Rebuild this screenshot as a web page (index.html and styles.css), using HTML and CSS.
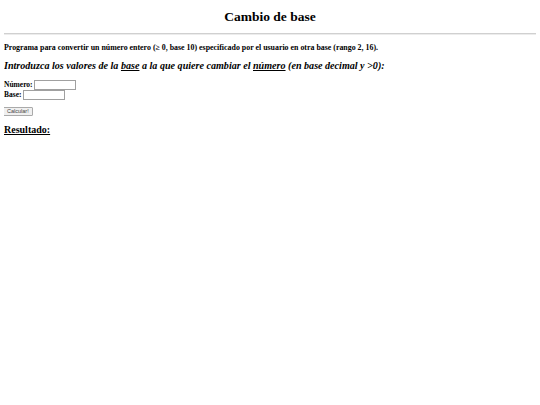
FILE: index.html
```html
<!DOCTYPE html>
<html lang="es">
<head>
<meta charset="utf-8">
<title>Cambio de base</title>
<link rel="stylesheet" href="styles.css">
</head>
<body>
<h1 class="title">Cambio de base</h1>
<hr class="rule">
<p class="intro">Programa para convertir un número entero (≥ 0, base 10) especificado por el usuario en otra base (rango 2, 16).</p>
<h2 class="prompt">Introduzca los valores de la <u>base</u> a la que quiere cambiar el <u>número</u> (en base decimal y &gt;0):</h2>
<form class="form">
<div class="field"><label class="lbl">Número:</label><input class="inp" type="text"></div>
<div class="field"><label class="lbl">Base:</label><input class="inp" type="text"></div>
<div class="actions"><button class="btn" type="button">Calcular!</button></div>
</form>
<h3 class="result"><u>Resultado:</u></h3>
</body>
</html>
```
FILE: styles.css
```css
html, body { background: #fff; }
body {
  margin: 5px 4px 4px;
  font-family: "Liberation Serif", "Times New Roman", serif;
  color: #000;
}
.title {
  font-size: 13.5px;
  font-weight: bold;
  text-align: center;
  margin: 4px 0 8px;
  line-height: 16px;
}
.rule {
  border: none;
  border-top: 1px solid #d0d0d0;
  border-bottom: 1px solid #ececec;
  margin: 0;
}
.intro {
  font-size: 7.9px;
  font-weight: bold;
  margin: 8px 0 0;
  line-height: 9px;
}
.prompt {
  font-size: 10.1px;
  font-style: italic;
  font-weight: bold;
  margin: 8px 0 0;
  line-height: 12px;
}
.form {
  margin: 8px 0 0;
}
.field {
  font-size: 7.5px;
  font-weight: bold;
  line-height: 10px;
  display: flex;
  align-items: center;
  gap: 1px;
}
.inp {
  width: 38px;
  height: 8px;
  padding: 0 1px;
  margin: 0;
  border: 1px solid #a0a0a0;
  font-size: 7px;
}
.actions { margin-top: 7px; display: flex; }
.btn {
  font-family: "Liberation Sans", Arial, sans-serif;
  font-size: 5.5px;
  padding: 0 3px;
  height: 9px;
  line-height: 7px;
  border: 1px solid #aaa;
  border-radius: 1px;
  background: #f0f0f0;
  color: #444;
  margin: 0 0 0 -1px;
}
.result {
  font-size: 10px;
  font-weight: bold;
  margin: 8px 0 0;
  line-height: 12px;
}
```
